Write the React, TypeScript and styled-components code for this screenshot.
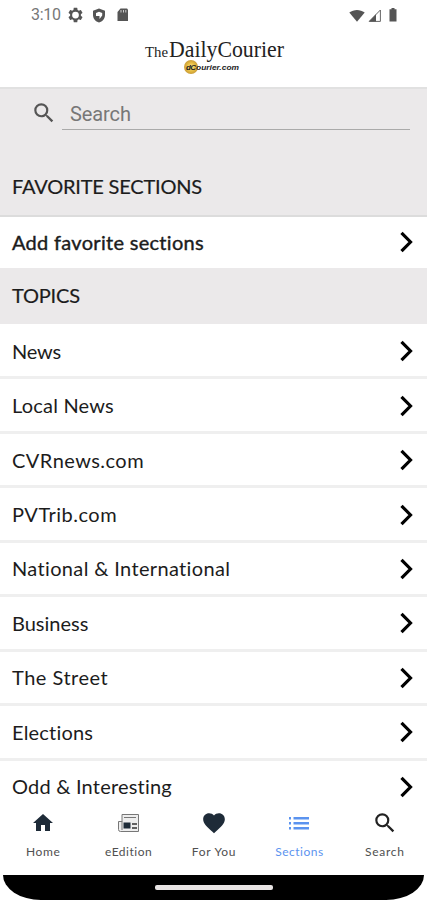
import React from 'react';
import styled, { createGlobalStyle } from 'styled-components';

const Global = createGlobalStyle`
  * { box-sizing: border-box; }
  body { margin: 0; background: #fff; font-family: Lato, sans-serif; color: #1c1c1c; overflow: hidden; }
`;
const Screen = styled.div`
  width: 427px; height: 900px; display: flex; flex-direction: column; background: #fff; overflow: hidden;
`;
const StatusBar = styled.div`
  height: 30px; flex: none; display: flex; align-items: center; padding: 0 29px 0 31px;
  font: 16px/30px Roboto, sans-serif; color: #777;
  svg { display: block; }
`;
const Clock = styled.span`width: 30px; letter-spacing: -0.3px; white-space: nowrap;`;
const StatusIcons = styled.div<{ $gap: number; $left?: string }>`
  display: flex; align-items: center; gap: ${p => p.$gap}px; margin-left: ${p => p.$left || '7px'};
`;
const Brand = styled.header`
  height: 57px; flex: none; display: flex; justify-content: center; padding-top: 7px;
`;
const SearchArea = styled.div`
  height: 72px; flex: none; background: #ebe9ea; border-top: 2px solid #e1e1e1;
  display: flex; padding: 11px 17px 0 31px;
`;
const Field = styled.div`
  flex: 1; height: 30px; margin-left: 5px; padding-left: 8px; border-bottom: 1px solid #aaa;
  font: 20px/28px Roboto, sans-serif; color: #777; letter-spacing: -0.1px;
`;
const Heading = styled.h2<{ $h: number; $line?: boolean; $ls: number }>`
  margin: 0; height: ${p => p.$h}px; flex: none; background: #ebe9ea; padding: 0 0 2px 12px;
  display: flex; align-items: center; font-size: 20px; font-weight: 400; letter-spacing: ${p => p.$ls}px;
  -webkit-text-stroke: 0.2px #1c1c1c;
  border-bottom: ${p => (p.$line ? '2px solid #dcdcdc' : '0')};
`;
const Row = styled.div<{ $bold?: boolean; $ls: number }>`
  height: ${p => (p.$bold ? 51 : 54.45)}px; flex: none; padding: 0 13px 0 12px;
  padding-bottom: ${p => (p.$bold ? 2 : 0)}px;
  display: flex; align-items: center; justify-content: space-between;
  font-size: 20px; letter-spacing: ${p => p.$ls}px; white-space: nowrap; line-height: 24px;
  border-bottom: ${p => (p.$bold ? '0' : '3px solid #efefef')};
  -webkit-text-stroke: ${p => (p.$bold ? '0.4px #1c1c1c' : '0')};
  svg { margin-top: 1px; }
`;
const List = styled.div`
  height: 475px; flex: none; overflow: hidden; padding-top: 1px;
  ${Row}:last-child { height: 51px; border-bottom: 0; }
`;
const Tabs = styled.nav`height: 76px; flex: none; display: grid; grid-template-columns: repeat(5, 1fr);`;
const Tab = styled.div<{ $active?: boolean; $ls: number }>`
  display: flex; flex-direction: column; align-items: center; padding: 12px 0 0 1px;
  font-size: 12px; line-height: 16px; letter-spacing: ${p => p.$ls}px; color: ${p => (p.$active ? '#5b93ef' : '#505050')};
  svg { margin-bottom: 9px; }
  svg[height="26"] { margin: -1px 0 8px; }
`;
const HomeBar = styled.div`
  height: 25px; flex: none; background: #000; margin: 0 3px; border-radius: 0 0 38px 38px / 0 0 25px 25px;
  display: flex; justify-content: center; padding-top: 10px;
`;
const Pill = styled.div`width: 118px; height: 5px; background: #e8e4e4; border-radius: 2px;`;

const Logo = () => (
  <svg width="142" height="38" viewBox="0 0 142 38" overflow="visible">
    <g fontFamily="Liberation Serif, serif" fill="#222">
      <text x="2" y="20" fontSize="15" textLength="23" lengthAdjust="spacingAndGlyphs">The</text>
      <text x="26" y="20" fontSize="24" textLength="115" lengthAdjust="spacingAndGlyphs">DailyCourier</text>
    </g>
    <defs>
      <radialGradient id="coin"><stop offset="0" stopColor="#ffe98a" /><stop offset=".65" stopColor="#e3b83e" /><stop offset="1" stopColor="#c99c3a" /></radialGradient>
    </defs>
    <circle cx="48" cy="30" r="7" fill="url(#coin)" />
    <g fontFamily="Liberation Sans, sans-serif" fontStyle="italic" fontWeight="700" fill="#222">
      <text x="43" y="33" fontSize="8" textLength="10">dC</text>
      <text x="53" y="32.500" fontSize="7" textLength="43" lengthAdjust="spacingAndGlyphs">ourier.com</text>
    </g>
  </svg>
);
const Glass = ({ size, color }: { size: number; color: string }) => (
  <svg width={size} height={size} viewBox="0 0 24 24" fill={color}>
    <path d="M15.5 14h-.79l-.28-.27A6.47 6.47 0 0 0 16 9.5 6.5 6.5 0 1 0 9.5 16c1.61 0 3.09-.59 4.23-1.57l.27.28v.79l5 4.99L20.49 19zM9.500 14A4.500 4.500 0 1 1 14 9.500 4.500 4.500 0 0 1 9.500 14z" />
  </svg>
);
const Chevron = () => (
  <svg width="15" height="22" viewBox="0 0 15 22" fill="none" stroke="#000" strokeWidth="3.2">
    <path d="M2.500 1.800L11.500 11L2.500 20.200" />
  </svg>
);

const topics: [string, number][] = [
  ['News', -0.2], ['Local News', 0.2], ['CVRnews.com', 0.45], ['PVTrib.com', 0.5],
  ['National & International', 0.35], ['Business', 0], ['The Street', 0.5], ['Elections', 0.2], ['Odd & Interesting', 0.2],
];

export default function App() {
  return (
    <Screen>
      <Global />
      <StatusBar>
        <Clock>3:10</Clock>
        <StatusIcons $gap={9}>
          <svg width="15" height="16" viewBox="2 2 20 20" fill="#555"><path d="M19.14 12.940c.04-.3.06-.61.06-.94s-.02-.64-.07-.94l2.030-1.580a.49.49 0 0 0 .12-.61l-1.920-3.320a.488.488 0 0 0-.59-.22l-2.390.96c-.5-.38-1.030-.7-1.620-.94l-.36-2.540a.484.484 0 0 0-.48-.41h-3.840c-.24 0-.43.17-.47.41l-.36 2.540c-.59.24-1.130.57-1.620.94l-2.390-.96c-.22-.08-.47 0-.59.22L2.740 8.870c-.12.21-.08.47.12.61l2.030 1.580c-.05.3-.09.63-.09.94s.02.64.07.94l-2.030 1.580a.49.49 0 0 0-.12.61l1.920 3.320c.12.22.37.29.59.22l2.390-.96c.5.38 1.030.7 1.620.94l.36 2.540c.05.24.24.41.48.41h3.840c.24 0 .44-.17.47-.41l.36-2.540c.59-.24 1.130-.56 1.620-.94l2.390.96c.22.08.47 0 .59-.22l1.920-3.320c.12-.22.07-.47-.12-.61zM12 16.500a4.500 4.500 0 1 1 0-9 4.500 4.500 0 0 1 0 9z" /></svg>
          <svg width="14" height="15" viewBox="0 0 14 15"><path d="M7 .5L13 2.700V7c0 3.700-2.500 6.500-6 7.500C3.500 13.500 1 10.700 1 7V2.700z" fill="#555" /><path d="M7 3.800l3.200 1.200v2.500L7.500 11V8H4V5z" fill="#fff" /></svg>
          <svg width="14" height="14" viewBox="-1.500 0 14 14"><path d="M4 .5h6.500l1 1V13H1V4z" fill="#555" /><path d="M4.500 2v2.500M7 2v2.500M9.300 2v2.500" stroke="#ccc" /></svg>
        </StatusIcons>
        <StatusIcons $gap={3} $left="auto">
          <svg width="16" height="13" viewBox="0 0 16 13"><path d="M.3 3.500C5 0 11 0 15.700 3.500L8 12.800z" fill="#555" /></svg>
          <svg width="13" height="13" viewBox="0 0 13 13"><path d="M1.200 12.400L12.400 1v11.400z" fill="none" stroke="#666" /><path d="M1 12.500L8 5.300v7.200z" fill="#555" /></svg>
          <svg width="14" height="14" viewBox="0 0 14 14"><path d="M5.500 1.200h2V0h3v1.200h2V13.500h-7z" fill="#555" /></svg>
        </StatusIcons>
      </StatusBar>
      <Brand><Logo /></Brand>
      <SearchArea>
        <Glass size={26} color="#555" />
        <Field>Search</Field>
      </SearchArea>
      <Heading $h={58} $line $ls={-0.2}>FAVORITE SECTIONS</Heading>
      <Row $bold $ls={0.3}>Add favorite sections<Chevron /></Row>
      <Heading $h={56} $ls={-0.2}>TOPICS</Heading>
      <List>
        {topics.map(([name, ls]) => <Row key={name} $ls={ls}>{name}<Chevron /></Row>)}
      </List>
      <Tabs>
        <Tab $ls={0.6}>
          <svg width="24" height="24" viewBox="0 0 24 24" fill="#1e2b38"><path d="M10 20v-6h4v6h5v-8h3L12 3 2 12h3v8z" /></svg>Home
        </Tab>
        <Tab $ls={0.5}>
          <svg width="24" height="24" viewBox="0 0 24 24"><path d="M5 3.500h16.500v17H3.500q-2 0-2-2v-8H5z" fill="#eee" stroke="#777" /><path d="M5 10v9M7 6.500h12" stroke="#777" /><path d="M6.500 11.500h7v6h-7z" fill="#1e2b38" /><path d="M15 13h5M15 17h5" stroke="#333" strokeWidth="1.300" /></svg>eEdition
        </Tab>
        <Tab $ls={0.7}>
          <svg width="26" height="26" viewBox="0 0 24 24" fill="#1e2b38"><path d="M12 21.350l-1.450-1.320C5.400 15.360 2 12.280 2 8.500 2 5.420 4.420 3 7.500 3c1.740 0 3.410.81 4.500 2.090C13.090 3.810 14.760 3 16.500 3 19.580 3 22 5.420 22 8.500c0 3.780-3.400 6.860-8.550 11.540z" /></svg>For You
        </Tab>
        <Tab $active $ls={0.5}>
          <svg width="24" height="24" viewBox="0 0 24 24" fill="#5b93ef"><path d="M2 6h2v2.500H2zM6.500 6H22v2.500H6.500zM2 11h2v2.500H2zM6.500 11H22v2.500H6.500zM2 16h2v2.500H2zM6.500 16H22v2.500H6.500z" /></svg>Sections
        </Tab>
        <Tab $ls={0.7}><Glass size={26} color="#222" />Search</Tab>
      </Tabs>
      <HomeBar><Pill /></HomeBar>
    </Screen>
  );
}
